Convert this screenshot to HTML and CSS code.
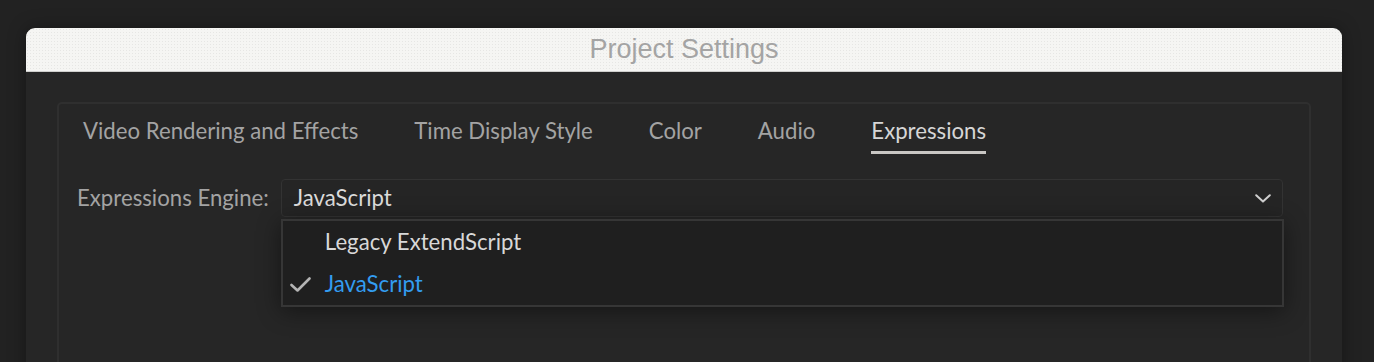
FILE: index.html
```html
<!DOCTYPE html>
<html>
<head>
<meta charset="utf-8">
<title>Project Settings</title>
<link rel="stylesheet" href="styles.css">
</head>
<body>
<div class="window">
  <div class="titlebar">Project Settings</div>
  <div class="content">
    <div class="panel">
      <div class="tabs">
        <div class="tab">Video Rendering and Effects</div>
        <div class="tab">Time Display Style</div>
        <div class="tab">Color</div>
        <div class="tab">Audio</div>
        <div class="tab active">Expressions</div>
      </div>
      <div class="row">
        <div class="label">Expressions Engine:</div>
        <div class="select-wrap">
          <div class="select">
            <span class="value">JavaScript</span>
            <svg class="chevron" width="16" height="9" viewBox="0 0 16 9"><path d="M1.2 1.2 L8 7.6 L14.8 1.2" fill="none" stroke="#cfcfcf" stroke-width="2" stroke-linecap="round" stroke-linejoin="round"/></svg>
          </div>
          <div class="menu">
            <div class="item">Legacy ExtendScript</div>
            <div class="item selected">
              <svg class="check" width="21" height="15" viewBox="0 0 21 15"><path d="M1.5 8 L7.5 13.5 L19.5 1.5" fill="none" stroke="#b4b4b4" stroke-width="2.6" stroke-linecap="round" stroke-linejoin="round"/></svg>
              JavaScript
            </div>
          </div>
        </div>
      </div>
    </div>
  </div>
</div>
</body>
</html>
```
FILE: styles.css
```css
html, body {
  margin: 0;
  padding: 0;
}
body {
  background: #222222;
  height: 362px;
  overflow: hidden;
  font-family: Lato, "Open Sans", sans-serif;
}
.window {
  margin: 28px 0 0 26px;
  width: 1316px;
  border-radius: 9px 9px 0 0;
  overflow: hidden;
  box-shadow: 0 0 18px rgba(0,0,0,0.35);
}
.titlebar {
  height: 43px;
  line-height: 43px;
  text-align: center;
  font-family: "Liberation Sans", Arial, sans-serif;
  font-size: 27px;
  color: #a4a4a4;
  background-color: #f5f5f3;
  background-image: radial-gradient(circle, #e6e6e4 0.6px, transparent 0.9px);
  background-size: 3px 3px;
  border-bottom: 1px solid #cfcfcd;
}
.content {
  background: #262626;
  padding: 30px 31px 0 31px;
  height: 400px;
}
.panel {
  border: 2px solid #2f2f2f;
  border-radius: 5px;
  height: 380px;
  padding: 13px 26px 0 18px;
}
.tabs {
  display: flex;
  gap: 56px;
  padding-left: 6px;
}
.tab {
  font-size: 22.2px;
  line-height: 28px;
  color: #a3a3a3;
  padding-bottom: 6px;
  border-bottom: 3px solid transparent;
}
.tab.active {
  color: #d6d6d6;
  border-bottom-color: #c9c7c4;
}
.row {
  display: flex;
  align-items: center;
  margin-top: 25px;
  gap: 12px;
}
.label {
  font-size: 22.2px;
  color: #a3a3a3;
  line-height: 28px;
}
.select-wrap {
  flex: 1;
  position: relative;
}
.select {
  height: 36px;
  border: 1px solid #333333;
  border-radius: 4px;
  background: #252525;
  display: flex;
  align-items: center;
  justify-content: space-between;
  padding: 0 11px 0 12px;
}
.value {
  font-size: 22.2px;
  line-height: 28px;
  color: #dcdcdc;
}
.chevron {
  display: block;
}
.menu {
  position: absolute;
  left: 0;
  right: -1px;
  top: 40px;
  background: #1f1f1f;
  border: 2px solid #363636;
  box-shadow: 0 4px 22px rgba(0,0,0,0.45);
}
.item {
  position: relative;
  height: 42px;
  line-height: 42px;
  font-size: 22.2px;
  color: #d8d8d8;
  padding-left: 42px;
}
.item.selected {
  color: #339cf0;
}
.check {
  position: absolute;
  left: 7px;
  top: 14px;
}
```
